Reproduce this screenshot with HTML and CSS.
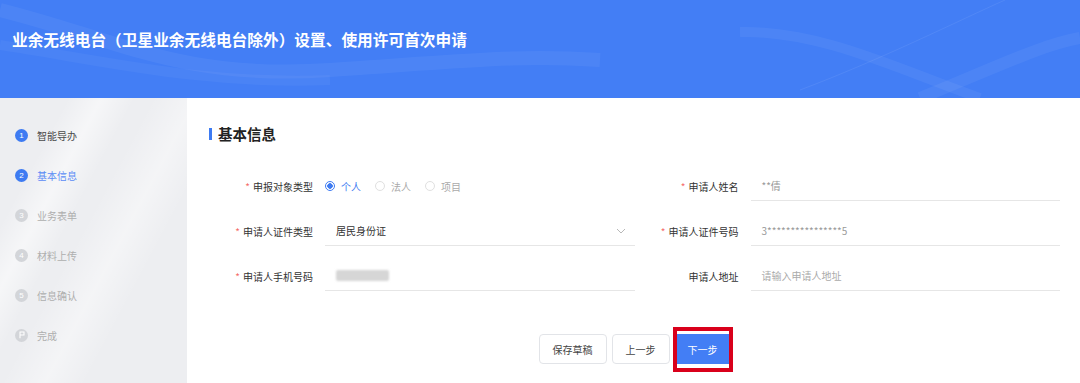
FILE: index.html
```html
<!DOCTYPE html>
<html lang="zh-CN">
<head>
  <meta charset="UTF-8" />
  <title>业余无线电台设置、使用许可首次申请</title>
  <link rel="stylesheet" href="styles.css">
</head>
<body>
  <header class="top">
    <svg class="waves" viewBox="0 0 1080 98" preserveAspectRatio="none" xmlns="http://www.w3.org/2000/svg">
      <path d="M0 10 C120 40 180 80 330 70 S520 55 600 60" fill="none" stroke="#ffffff" stroke-opacity="0.05" stroke-width="14"/>
      <path d="M0 45 C100 60 200 85 330 80" fill="none" stroke="#ffffff" stroke-opacity="0.04" stroke-width="10"/>
      <path d="M740 32 C820 30 900 70 980 98" fill="none" stroke="#ffffff" stroke-opacity="0.05" stroke-width="10"/>
      <path d="M800 90 C880 60 960 20 1005 0" fill="none" stroke="#ffffff" stroke-opacity="0.07" stroke-width="1"/>
      <path d="M920 98 C990 70 1040 45 1080 38" fill="none" stroke="#ffffff" stroke-opacity="0.05" stroke-width="12"/>
    </svg>
    <h1>业余无线电台（卫星业余无线电台除外）设置、使用许可首次申请</h1>
  </header>

  <div class="body">
    <aside class="steps">
      <div class="step done"><span class="dot">1</span>智能导办</div>
      <div class="step active"><span class="dot">2</span>基本信息</div>
      <div class="step"><span class="dot">3</span>业务表单</div>
      <div class="step"><span class="dot">4</span>材料上传</div>
      <div class="step"><span class="dot">5</span>信息确认</div>
      <div class="step">
        <span class="dot">
          <svg viewBox="0 0 12 12" width="8" height="8"><path d="M3 11V1.5h6v4.5H3" fill="none" stroke="#fff" stroke-width="1.6"/></svg>
        </span>完成
      </div>
    </aside>

    <main class="content">
      <h2 class="section-title">基本信息</h2>

      <div class="form">
        <div class="field">
          <label class="req">申报对象类型</label>
          <div class="radios">
            <span class="radio checked"><i></i>个人</span>
            <span class="radio"><i></i>法人</span>
            <span class="radio"><i></i>项目</span>
          </div>
        </div>
        <div class="field">
          <label class="req">申请人姓名</label>
          <div class="input muted">**倩</div>
        </div>

        <div class="field">
          <label class="req">申请人证件类型</label>
          <div class="input select">
            居民身份证
            <svg class="chev" viewBox="0 0 10 6" width="10" height="6"><path d="M1 1l4 4 4-4" fill="none" stroke="#b8b8b8" stroke-width="1"/></svg>
          </div>
        </div>
        <div class="field">
          <label class="req">申请人证件号码</label>
          <div class="input muted">3****************5</div>
        </div>

        <div class="field">
          <label class="req">申请人手机号码</label>
          <div class="input"><span class="blurred"></span></div>
        </div>
        <div class="field">
          <label>申请人地址</label>
          <div class="input placeholder">请输入申请人地址</div>
        </div>
      </div>

      <div class="actions">
        <button class="btn">保存草稿</button>
        <button class="btn">上一步</button>
        <button class="btn primary">下一步<span class="mark"></span></button>
      </div>
    </main>
  </div>
</body>
</html>
```

FILE: styles.css
```css
html, body {
  margin: 0;
  padding: 0;
  height: 100%;
  overflow: hidden;
  font-family: "Noto Sans CJK SC", "Liberation Sans", sans-serif;
  color: #333;
  background: #fff;
}

.top {
  position: relative;
  height: 98px;
  background: #437ef5;
  overflow: hidden;
}

.waves {
  position: absolute;
  left: 0;
  top: 0;
  width: 100%;
  height: 100%;
}

.top h1 {
  position: relative;
  margin: 0;
  padding: 29px 0 0 12px;
  font-size: 15.7px;
  line-height: 22px;
  font-weight: 700;
  color: #fff;
}

.body {
  display: flex;
  height: 285px;
}

.steps {
  width: 187px;
  flex: none;
  padding: 17px 0 0 15px;
  box-sizing: border-box;
  background:
    linear-gradient(118deg, transparent 20%, rgba(255,255,255,0.5) 30%, transparent 40%),
    linear-gradient(118deg, transparent 45%, rgba(255,255,255,0.4) 58%, transparent 70%),
    #edeef1;
}

.step {
  display: flex;
  align-items: center;
  height: 40px;
  gap: 9px;
  font-size: 10px;
  color: #aeaeae;
}

.dot {
  display: flex;
  align-items: center;
  justify-content: center;
  width: 13px;
  height: 13px;
  border-radius: 50%;
  background: #d3d5d9;
  color: #fff;
  font-size: 8px;
  font-family: "Liberation Sans", sans-serif;
}

.step.done { color: #4a4a4a; }
.step.active { color: #5b8cf5; }
.step.done .dot,
.step.active .dot { background: #3e7bf2; }

.content {
  flex: 1;
  padding: 26px 20px 0 22px;
}

.section-title {
  margin: 0;
  display: flex;
  align-items: center;
  gap: 6px;
  font-size: 14.5px;
  line-height: 20px;
  font-weight: 700;
  color: #222;
}

.section-title::before {
  content: "";
  width: 3px;
  height: 12px;
  background: #3e7bf2;
}

.form {
  display: grid;
  grid-template-columns: 1fr 1fr;
  column-gap: 4px;
  row-gap: 15px;
  margin: 27px 0 0 4px;
}

.field {
  display: flex;
  align-items: center;
  gap: 12px;
  height: 30px;
}

.field label {
  width: 100px;
  flex: none;
  text-align: right;
  font-size: 10px;
  color: #333;
}

.field label.req::before {
  content: "*";
  color: #f56c6c;
  margin-right: 3px;
}

.input {
  position: relative;
  flex: 1;
  height: 30px;
  display: flex;
  align-items: center;
  padding-left: 11px;
  border-bottom: 1px solid #e6e6e6;
  box-sizing: border-box;
  font-size: 10px;
  color: #333;
}

.input.muted { color: #999; }
.input.placeholder { color: #aaa; }

.chev {
  position: absolute;
  right: 9px;
  top: 12px;
}

.blurred {
  width: 53px;
  height: 11px;
  background: #d6d6d6;
  border-radius: 2px;
  filter: blur(1.2px);
}

.radios {
  display: flex;
  align-items: center;
  gap: 14px;
  height: 30px;
  font-size: 10px;
  color: #aaa;
}

.radio {
  display: flex;
  align-items: center;
  gap: 6px;
}

.radio i {
  width: 10px;
  height: 10px;
  border: 1px solid #e0e0e0;
  border-radius: 50%;
  box-sizing: border-box;
}

.radio.checked { color: #3e7bf2; }

.radio.checked i {
  border-color: #3e7bf2;
  background: radial-gradient(circle, #3e7bf2 0 2.5px, #fff 3px);
}

.actions {
  display: flex;
  justify-content: center;
  gap: 5px;
  margin-top: 43px;
}

.btn {
  position: relative;
  height: 30px;
  padding: 0 13px;
  border: 1px solid #e2e4e8;
  border-radius: 4px;
  background: #fff;
  font-family: inherit;
  font-size: 10px;
  color: #444;
}

.btn.primary {
  padding: 0 12px;
  background: #437ef5;
  border-color: #437ef5;
  color: #fff;
  border-radius: 0;
}

/* red annotation box drawn over the next button */
.mark {
  position: absolute;
  left: -3px;
  right: -3px;
  top: -8px;
  bottom: -9px;
  border: 4px solid #d9001b;
}
```
